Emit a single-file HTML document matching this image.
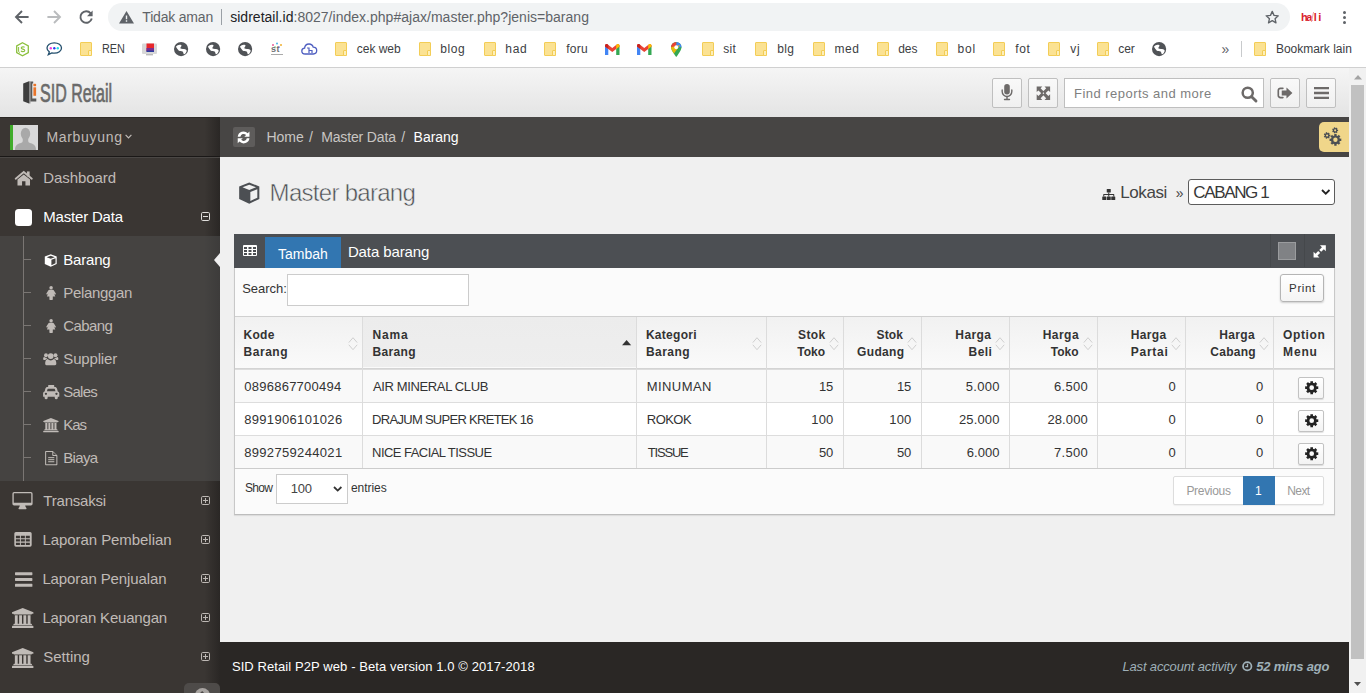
<!DOCTYPE html>
<html lang="id">
<head>
<meta charset="utf-8">
<title>SID Retail</title>
<style>
*{box-sizing:border-box;margin:0;padding:0}
html,body{width:1366px;height:693px;overflow:hidden;background:#fff}
body{font-family:"Liberation Sans",sans-serif;font-size:13px;color:#333;position:relative}
div,span.t{position:absolute}
span.t{white-space:pre}
svg{display:block;position:absolute;overflow:visible}
#chrome{left:0;top:0;width:1366px;height:68px;background:#fff;border-bottom:1px solid #d0d0d0}
#pill{left:108px;top:3px;width:1182px;height:28px;border-radius:14px;background:#f1f3f4}
.fold{width:12px;height:14px;top:42px;background:#fbe293;border:1px solid #f3cd56;border-radius:1px}
.fold i{position:absolute;right:-1px;bottom:-1px;width:4px;height:6px;background:#fdefb9;border:1px solid #f3cd56;border-radius:1px}
#header{left:0;top:68px;width:1349px;height:49px;background:linear-gradient(#f5f5f5,#e4e4e4)}
.hbtn{top:78px;width:30px;height:30px;border:1px solid #bfbfbf;border-radius:2px;background:linear-gradient(#f9f9f9,#f0f0f0)}
#side{left:0;top:117px;width:220px;height:576px;background:linear-gradient(to right,#3a3633 93%,#2a2725 100%)}
#ribbon{left:220px;top:117px;width:1129px;height:40px;background:#474544}
#main{left:220px;top:157px;width:1129px;height:485px;background:#f0f0f0}
#footer{left:220px;top:642px;width:1129px;height:51px;background:#2a2725}
#scroll{left:1349px;top:68px;width:17px;height:625px;background:#f1f1f1}
</style>
</head>
<body>
<section aria-label="Browser toolbar">
<div id="chrome"><div id="pill"></div></div>
<svg style="left:15px;top:10px" width="14" height="14" viewBox="0 0 14 14" ><path d="M13.600 7 H1.800 M7 1 L1 7 L7 13" fill="none" stroke="#5f6368" stroke-width="1.900"/></svg>
<svg style="left:47px;top:10px" width="14" height="14" viewBox="0 0 14 14" ><path d="M.4 7 H12.200 M7 1 L13 7 L7 13" fill="none" stroke="#babcbe" stroke-width="1.900"/></svg>
<svg style="left:79px;top:10px" width="14" height="14" viewBox="0 0 14 14" ><path d="M11.700 3.300 A5.800 5.800 0 1 0 12.800 8.600" fill="none" stroke="#5f6368" stroke-width="1.900"/><path d="M13.600 .6 V6.200 H8 Z" fill="#5f6368"/></svg>
<svg style="left:118.5px;top:11px" width="15" height="12.5" viewBox="0 0 15 12.500" ><path fill-rule="evenodd" d="M7.500 0 L15 12.500 H0 Z M6.800 4.600 V8.200 H8.200 V4.600 Z M6.800 9.300 V10.700 H8.200 V9.300 Z" fill="#5f6368"/></svg>
<span class="t" style="left:142.3px;top:8.1px;font-size:14px;line-height:18px;color:#5f6368;letter-spacing:-0.19px;">Tidak aman</span>
<div style="left:221px;top:9px;width:1px;height:16px;background:#9aa0a6"></div>
<span class="t" style="left:230.2px;top:8.1px;font-size:14px;line-height:18px;color:#5f6368;letter-spacing:0.02px;"><span style="color:#202124">sidretail.id</span>:8027/index.php#ajax/master.php?jenis=barang</span>
<svg style="left:1264.5px;top:10px" width="14.5" height="14" viewBox="0 0 24 23" ><path d="M12 2.200 L14.900 8.800 L22 9.500 L16.600 14.300 L18.200 21.300 L12 17.600 L5.800 21.300 L7.400 14.300 L2 9.500 L9.100 8.800 Z" fill="none" stroke="#5f6368" stroke-width="2.200" stroke-linejoin="round"/></svg>
<span class="t" style="left:1301.0px;top:10.2px;font-size:11px;line-height:14px;color:#d9232e;letter-spacing:-1.50px;font-weight:700;">ha</span>
<span class="t" style="left:1313.8px;top:10.2px;font-size:11px;line-height:14px;color:#d9232e;letter-spacing:1.50px;font-weight:700;">li</span>
<div style="left:1311.500px;top:12px;width:1px;height:10px;background:#f0a0a5;transform:skewX(-12deg)"></div>
<div style="left:1343px;top:11.1px;width:3px;height:3px;border-radius:50%;background:#5f6368"></div>
<div style="left:1343px;top:15.9px;width:3px;height:3px;border-radius:50%;background:#5f6368"></div>
<div style="left:1343px;top:20.8px;width:3px;height:3px;border-radius:50%;background:#5f6368"></div>
<svg style="left:15.5px;top:41.5px" width="13" height="14.5" viewBox="0 0 13 14.500" ><path d="M6.500 .7 L12.300 4 V10.500 L6.500 13.800 L.7 10.500 V4 Z" fill="none" stroke="#8cc03e" stroke-width="1.300"/><path d="M8.600 5.400 C8.300 4.700 5.200 4.500 5.200 6 C5.200 7.400 8.800 6.800 8.800 8.500 C8.800 10 5.400 9.900 5 8.800" fill="none" stroke="#8cc03e" stroke-width="1.100"/><path d="M2.600 5 V9.200 C2.600 10.300 3.600 10.600 4 10.200" fill="none" stroke="#8cc03e" stroke-width="1"/></svg>
<svg style="left:45.5px;top:42px" width="16.5" height="13.5" viewBox="0 0 16.500 13.500" ><path d="M8.300 .8 C4.300 .8 1 3 1 6 C1 7.600 1.900 9 3.300 9.900 L2.300 12.700 L5.800 10.900 C6.600 11.100 7.400 11.200 8.300 11.200 C12.300 11.200 15.500 9 15.500 6 C15.500 3 12.300 .8 8.300 .8 Z" fill="#fff" stroke="#24506e" stroke-width="1.300"/><circle cx="4.800" cy="6.200" r="1.200" fill="#f540d8"/><circle cx="8.300" cy="6.200" r="1.200" fill="#2a3cf0"/><circle cx="11.800" cy="6.200" r="1.200" fill="#21e0e6"/></svg>
<div class="fold" style="left:80px"><i></i></div>
<span class="t" style="left:102.1px;top:40.6px;font-size:12px;line-height:16px;color:#3c4043;letter-spacing:0.00px;transform-origin:0 50%;transform:scaleX(0.906);">REN</span>
<svg style="left:142px;top:42px" width="15" height="14" viewBox="0 0 15 14" ><rect x="0" y="1.500" width="15" height="10.500" rx="1" fill="#d8d8d8"/><rect x="4.500" y="1.500" width="7.500" height="7.500" fill="#e8262a"/><rect x="4.500" y="6" width="7.500" height="3.500" fill="#7a2f8f"/><rect x="4.500" y="8.500" width="7.500" height="1.500" fill="#2a3f9f"/><rect x="4" y="12" width="7" height="1.400" fill="#bbb"/></svg>
<svg style="left:174px;top:42px" width="14.2" height="14.2" viewBox="0 0 24 24" ><circle cx="12" cy="12" r="12" fill="#505357"/><path d="M3.200 8.200 C5.500 5 9.500 3.800 12 5.200 C14 6.400 11.500 8.200 10.800 9.800 C10.200 11.400 12.800 11.600 14.800 11.800 C17.500 12 20.500 12.200 21.600 14.600 C20.800 18 18.800 20.200 16.800 20.800 C15.200 19.600 16.200 17.400 14.600 16.200 C12.800 14.800 9.800 15.800 7.800 14.200 C6 12.800 5 10.200 3.200 8.200 Z" fill="#fff"/></svg>
<svg style="left:206px;top:42px" width="14.2" height="14.2" viewBox="0 0 24 24" ><circle cx="12" cy="12" r="12" fill="#505357"/><path d="M3.200 8.200 C5.500 5 9.500 3.800 12 5.200 C14 6.400 11.500 8.200 10.800 9.800 C10.200 11.400 12.800 11.600 14.800 11.800 C17.500 12 20.500 12.200 21.600 14.600 C20.800 18 18.800 20.200 16.800 20.800 C15.200 19.600 16.200 17.400 14.600 16.200 C12.800 14.800 9.800 15.800 7.800 14.200 C6 12.800 5 10.200 3.200 8.200 Z" fill="#fff"/></svg>
<svg style="left:238px;top:42px" width="14.2" height="14.2" viewBox="0 0 24 24" ><circle cx="12" cy="12" r="12" fill="#505357"/><path d="M3.200 8.200 C5.500 5 9.500 3.800 12 5.200 C14 6.400 11.500 8.200 10.800 9.800 C10.200 11.400 12.800 11.600 14.800 11.800 C17.500 12 20.500 12.200 21.600 14.600 C20.800 18 18.800 20.200 16.800 20.800 C15.200 19.600 16.200 17.400 14.600 16.200 C12.800 14.800 9.800 15.800 7.800 14.200 C6 12.800 5 10.200 3.200 8.200 Z" fill="#fff"/></svg>
<svg style="left:1152px;top:42px" width="14.2" height="14.2" viewBox="0 0 24 24" ><circle cx="12" cy="12" r="12" fill="#505357"/><path d="M3.200 8.200 C5.500 5 9.500 3.800 12 5.200 C14 6.400 11.500 8.200 10.800 9.800 C10.200 11.400 12.800 11.600 14.800 11.800 C17.500 12 20.500 12.200 21.600 14.600 C20.800 18 18.800 20.200 16.800 20.800 C15.200 19.600 16.200 17.400 14.600 16.200 C12.800 14.800 9.800 15.800 7.800 14.200 C6 12.800 5 10.200 3.200 8.200 Z" fill="#fff"/></svg>
<svg style="left:270px;top:42px" width="14" height="14" viewBox="0 0 14 14" ><circle cx="3" cy="3" r="1" fill="#e85d9a"/><circle cx="7" cy="1.500" r="1" fill="#4ab4e6"/><circle cx="11" cy="3" r="1" fill="#f0b030"/><circle cx="5" cy="5" r=".8" fill="#67c26a"/><circle cx="9" cy="5" r=".8" fill="#9a6ad0"/><rect x="1" y="12" width="12" height="1" fill="#aaa"/></svg><span class="t" style="left:271.0px;top:42.9px;font-size:9px;line-height:12px;color:#6b6f73;letter-spacing:0.56px;font-weight:700;">st</span>
<svg style="left:301px;top:43px" width="16.5" height="12" viewBox="0 0 16.500 12" ><path d="M4.200 11 C2 11 .8 9.600 .8 8 C.8 6.400 2 5.200 3.600 5.100 C3.800 2.700 5.700 1 8 1 C10 1 11.700 2.300 12.200 4.200 C14.200 4.300 15.700 5.700 15.700 7.600 C15.700 9.500 14.200 11 12.300 11 Z" fill="none" stroke="#4e5ec0" stroke-width="1.300"/><path d="M6 5 H8 V10 M8 7.500 H11 V10" fill="none" stroke="#4e5ec0" stroke-width="1.200"/></svg>
<div class="fold" style="left:335px"><i></i></div>
<span class="t" style="left:356.8px;top:40.6px;font-size:12px;line-height:16px;color:#3c4043;letter-spacing:-0.02px;">cek web</span>
<div class="fold" style="left:419px"><i></i></div>
<span class="t" style="left:440.3px;top:40.6px;font-size:12px;line-height:16px;color:#3c4043;letter-spacing:0.60px;">blog</span>
<div class="fold" style="left:484px"><i></i></div>
<span class="t" style="left:505.3px;top:40.6px;font-size:12px;line-height:16px;color:#3c4043;letter-spacing:0.70px;">had</span>
<div class="fold" style="left:544px"><i></i></div>
<span class="t" style="left:566.2px;top:40.6px;font-size:12px;line-height:16px;color:#3c4043;letter-spacing:0.30px;">foru</span>
<div class="fold" style="left:702px"><i></i></div>
<span class="t" style="left:723.3px;top:40.6px;font-size:12px;line-height:16px;color:#3c4043;letter-spacing:0.27px;">sit</span>
<div class="fold" style="left:755px"><i></i></div>
<span class="t" style="left:777.2px;top:40.6px;font-size:12px;line-height:16px;color:#3c4043;letter-spacing:0.37px;">blg</span>
<div class="fold" style="left:813px"><i></i></div>
<span class="t" style="left:834.5px;top:40.6px;font-size:12px;line-height:16px;color:#3c4043;letter-spacing:0.55px;">med</span>
<div class="fold" style="left:877px"><i></i></div>
<span class="t" style="left:898.3px;top:40.6px;font-size:12px;line-height:16px;color:#3c4043;letter-spacing:-0.12px;">des</span>
<div class="fold" style="left:936px"><i></i></div>
<span class="t" style="left:957.5px;top:40.6px;font-size:12px;line-height:16px;color:#3c4043;letter-spacing:0.82px;">bol</span>
<div class="fold" style="left:993px"><i></i></div>
<span class="t" style="left:1015.2px;top:40.6px;font-size:12px;line-height:16px;color:#3c4043;letter-spacing:0.65px;">fot</span>
<div class="fold" style="left:1048px"><i></i></div>
<span class="t" style="left:1070.2px;top:40.6px;font-size:12px;line-height:16px;color:#3c4043;letter-spacing:0.87px;">vj</span>
<div class="fold" style="left:1097px"><i></i></div>
<span class="t" style="left:1118.3px;top:40.6px;font-size:12px;line-height:16px;color:#3c4043;letter-spacing:-0.17px;">cer</span>
<div class="fold" style="left:1254px"><i></i></div>
<span class="t" style="left:1275.9px;top:40.6px;font-size:12px;line-height:16px;color:#3c4043;letter-spacing:-0.01px;">Bookmark lain</span>
<svg style="left:605px;top:44px" width="14.5" height="11" viewBox="0 0 14.500 11" ><path d="M0 1.500 V11 H3.300 V5 Z" fill="#4285f4"/><path d="M14.500 1.500 V11 H11.200 V5 Z" fill="#34a853"/><path d="M0 1.600 C0 .2 1.600 -.5 2.700 .4 L7.250 3.900 L11.800 .4 C12.900 -.5 14.500 .2 14.500 1.600 V2.500 L7.250 8 L0 2.500 Z" fill="#ea4335"/><path d="M11.200 .9 L11.800 .4 C12.900 -.5 14.500 .2 14.500 1.600 V2.500 L11.200 5 Z" fill="#fbbc04"/><path d="M3.300 .9 L2.700 .4 C1.600 -.5 0 .2 0 1.600 V2.500 L3.300 5 Z" fill="#c5221f"/></svg>
<svg style="left:636.5px;top:44px" width="14.5" height="11" viewBox="0 0 14.500 11" ><path d="M0 1.500 V11 H3.300 V5 Z" fill="#4285f4"/><path d="M14.500 1.500 V11 H11.200 V5 Z" fill="#34a853"/><path d="M0 1.600 C0 .2 1.600 -.5 2.700 .4 L7.250 3.900 L11.800 .4 C12.900 -.5 14.500 .2 14.500 1.600 V2.500 L7.250 8 L0 2.500 Z" fill="#ea4335"/><path d="M11.200 .9 L11.800 .4 C12.900 -.5 14.500 .2 14.500 1.600 V2.500 L11.200 5 Z" fill="#fbbc04"/><path d="M3.300 .9 L2.700 .4 C1.600 -.5 0 .2 0 1.600 V2.500 L3.300 5 Z" fill="#c5221f"/></svg>
<svg style="left:670.5px;top:41.5px" width="10.5" height="15" viewBox="0 0 10.500 15" ><path d="M5.250 15 C5.250 15 0 8.500 0 5.250 A5.250 5.250 0 0 1 10.500 5.250 C10.500 8.500 5.250 15 5.250 15 Z" fill="#34a853"/><path d="M5.250 0 A5.250 5.250 0 0 1 10.500 5.250 L5.250 5.250 Z" fill="#4285f4"/><path d="M5.250 0 A5.250 5.250 0 0 0 0 5.250 L5.250 5.250 Z" fill="#ea4335"/><path d="M0 5.250 C0 7 1.500 9.500 3 11.500 L9 3 Z" fill="#fbbc04" opacity=".9"/><circle cx="5.250" cy="5.250" r="1.900" fill="#fff"/></svg>
<span class="t" style="left:1221.6px;top:40.1px;font-size:14px;line-height:18px;color:#5f6368;letter-spacing:1.50px;">»</span>
<div style="left:1241px;top:41px;width:1px;height:16px;background:#c8cacc"></div>
</section><header>
<div id="header"></div>
<svg style="left:23px;top:81px" width="14" height="23" viewBox="0 0 14 23" ><path d="M.2 2.400 L6 .3 V22.500 L.2 20.300 Z" fill="#3e3e3e"/><path d="M6 .3 H7.400 V22.500 H6 Z" fill="#8a8a8a"/><path d="M7.400 .5 H10.200 V2.600 H9.300 V17.600 H13.300 V20.400 H7.400 Z" fill="#595959"/><rect x="10.400" y="6.300" width="2.700" height="8.500" fill="#e9742a"/><rect x="10.400" y="2.800" width="2.700" height="2.500" rx=".6" fill="#e9742a"/></svg>
<span class="t" style="left:39.900px;top:76.200px;font-size:26px;line-height:34px;color:#6a6a6a;-webkit-text-stroke:.7px #6a6a6a;transform-origin:0 0;transform:scaleX(0.616)">SID Retail</span>
<div class="hbtn" style="left:992px"></div>
<div class="hbtn" style="left:1028px"></div>
<div class="hbtn" style="left:1270px"></div>
<div class="hbtn" style="left:1306px"></div>
<div style="left:1064px;top:78px;width:200px;height:30px;border:1px solid #bfbfbf;background:#fff"></div>
<svg style="left:1001px;top:84px" width="12" height="16.5" viewBox="0 0 18 26" ><rect x="4.600" y="0" width="8.800" height="16.500" rx="4.400" fill="#6d6a69"/><path d="M1.400 9.500 V12 a7.600 7.600 0 0 0 15.200 0 V9.500" fill="none" stroke="#6d6a69" stroke-width="2.200" stroke-linecap="round"/><rect x="7.900" y="19" width="2.200" height="5" fill="#6d6a69"/><rect x="4" y="23.400" width="10" height="2.200" rx="1" fill="#6d6a69"/></svg>
<svg style="left:1035.7px;top:85.7px" width="14.8" height="14.4" viewBox="0 0 24 24" fill="#6d6a69"><path transform="rotate(0 12 12)" d="M.8 .8 H10.200 L7.300 3.700 L13 9.400 L9.400 13 L3.700 7.300 L.8 10.200 Z"/><path transform="rotate(90 12 12)" d="M.8 .8 H10.200 L7.300 3.700 L13 9.400 L9.400 13 L3.700 7.300 L.8 10.200 Z"/><path transform="rotate(180 12 12)" d="M.8 .8 H10.200 L7.300 3.700 L13 9.400 L9.400 13 L3.700 7.300 L.8 10.200 Z"/><path transform="rotate(270 12 12)" d="M.8 .8 H10.200 L7.300 3.700 L13 9.400 L9.400 13 L3.700 7.300 L.8 10.200 Z"/></svg>
<span class="t" style="left:1074.1px;top:85.1px;font-size:13px;line-height:17px;color:#808080;letter-spacing:0.46px;">Find reports and more</span>
<svg style="left:1240.5px;top:85.5px" width="16.5" height="16.5" viewBox="0 0 24 24" ><circle cx="9.800" cy="9.800" r="7.400" fill="none" stroke="#6d6a69" stroke-width="3.600"/><path d="M15.500 15.500 L21.800 21.800" stroke="#6d6a69" stroke-width="4.200" stroke-linecap="round"/></svg>
<svg style="left:1276.6px;top:86.9px" width="15.4" height="11.9" viewBox="0 0 26 20" ><path d="M10 2.200 H5.800 A3.600 3.600 0 0 0 2.200 5.800 V14.200 A3.600 3.600 0 0 0 5.800 17.800 H10" fill="none" stroke="#6d6a69" stroke-width="2.800" stroke-linecap="round"/><path d="M8 5.800 H16 V.8 L26 10 L16 19.200 V14.200 H8 Z" fill="#6d6a69"/></svg>
<svg style="left:1313.7px;top:86.9px" width="15" height="12" viewBox="0 0 15 12" ><path d="M0 0 h15 v2.300 h-15 Z M0 4.850 h15 v2.300 h-15 Z M0 9.700 h15 v2.300 h-15 Z" fill="#6d6a69"/></svg>
</header>
<aside><nav aria-label="Main menu">
<div id="side"></div>
<div style="left:0;top:117px;width:220px;height:40px;border-top:1px solid #2b2826;border-bottom:1px solid #1a1817;box-shadow:0 1px 0 #4a4745"></div>
<div style="left:10px;top:125px;width:28px;height:25px;background:#d9d9d9;border-left:3px solid #40ac2b;overflow:hidden"><svg style="left:3px;top:2px" width="19" height="23" viewBox="0 0 19 23" ><ellipse cx="9.500" cy="6.800" rx="4.700" ry="6" fill="#a9a9a9"/><path d="M-1 23 C-1 18 2 16.800 5.500 15.800 C7 15.200 7 13.500 6.600 11 H12.400 C12 13.500 12 15.200 13.500 15.800 C17 16.800 20 18 20 23 Z" fill="#a9a9a9"/></svg></div>
<span class="t" style="left:46.4px;top:128.3px;font-size:14px;line-height:18px;color:#c0bbb7;letter-spacing:0.70px;">Marbuyung</span>
<svg style="left:125px;top:134.2px" width="7" height="5" viewBox="0 0 7 5" ><path d="M.6 .8 L3.500 3.800 L6.400 .8" fill="none" stroke="#c0bbb7" stroke-width="1.200"/></svg>
<div style="left:0;top:236px;width:220px;height:245px;background:rgba(80,80,80,.5)"></div>
<svg style="left:14.5px;top:170.5px" width="17.5" height="14.5" viewBox="0 0 17.600 14.500" ><path d="M.7 7.700 L8.800 1 L16.900 7.700" fill="none" stroke="#c0bbb7" stroke-width="1.900" stroke-linecap="round"/><rect x="12" y=".4" width="2.700" height="5" fill="#c0bbb7"/><path d="M2.500 8.600 L8.800 3.400 L15.100 8.600 V14.500 H10.500 V10.300 H7.100 V14.500 H2.500 Z" fill="#c0bbb7"/></svg>
<span class="t" style="left:43.3px;top:167.6px;font-size:15px;line-height:20px;color:#c0bbb7;letter-spacing:-0.07px;">Dashboard</span>
<div style="left:14.500px;top:209px;width:17.500px;height:17px;border-radius:3.500px;background:#fff"></div>
<span class="t" style="left:43.3px;top:206.9px;font-size:15px;line-height:20px;color:#fff;letter-spacing:-0.20px;">Master Data</span>
<svg style="left:201px;top:212px" width="9" height="9" viewBox="0 0 9 9" ><rect x=".5" y=".5" width="8" height="8" rx="1.200" fill="none" stroke="#e0dedc" stroke-width="1"/><rect x="2" y="4" width="5" height="1" fill="#e0dedc"/></svg>
<div style="left:23px;top:236px;width:1px;height:245px;background:#7a7673"></div>
<div style="left:24px;top:259.0px;width:7px;height:1px;background:#7a7673"></div>
<svg style="left:43.6px;top:254px" width="13.5" height="13" viewBox="0 0 24 24" fill="#fff"><path fill-rule="evenodd" d="M12 .6 L23 4.8 V18.6 L12 23.6 L1 18.6 V4.8 Z M12 3 L4.6 5.8 L12 8.7 L19.4 5.8 Z M13.2 10.8 V20.6 L20.8 17.2 V7.8 Z"/></svg>
<span class="t" style="left:63.3px;top:249.6px;font-size:15px;line-height:20px;color:#fff;letter-spacing:-0.19px;">Barang</span>
<div style="left:24px;top:292.0px;width:7px;height:1px;background:#7a7673"></div>
<svg style="left:45.8px;top:286px" width="10.2" height="14" viewBox="0 0 20 28" fill="#c0bbb7"><circle cx="10" cy="3.600" r="3.500"/><path d="M6.800 7.600 H13.200 a3 3 0 0 1 2.700 1.700 L19.400 15 a1.400 1.400 0 0 1 -2.500 1.300 L15.200 13.400 L18.400 21 H13.400 V26.600 a1.200 1.200 0 0 1 -1.200 1.200 H7.800 a1.200 1.200 0 0 1 -1.200 -1.200 V21 H1.600 L4.800 13.400 L3.100 16.300 A1.400 1.400 0 0 1 .6 15 L4.100 9.300 A3 3 0 0 1 6.800 7.600 Z"/></svg>
<span class="t" style="left:63.3px;top:282.6px;font-size:15px;line-height:20px;color:#c0bbb7;letter-spacing:-0.35px;">Pelanggan</span>
<div style="left:24px;top:325.0px;width:7px;height:1px;background:#7a7673"></div>
<svg style="left:45.8px;top:319px" width="10.2" height="14" viewBox="0 0 20 28" fill="#c0bbb7"><circle cx="10" cy="3.600" r="3.500"/><path d="M6.800 7.600 H13.200 a3 3 0 0 1 2.700 1.700 L19.400 15 a1.400 1.400 0 0 1 -2.500 1.300 L15.200 13.400 L18.400 21 H13.400 V26.600 a1.200 1.200 0 0 1 -1.200 1.200 H7.800 a1.200 1.200 0 0 1 -1.200 -1.200 V21 H1.600 L4.800 13.400 L3.100 16.300 A1.400 1.400 0 0 1 .6 15 L4.100 9.300 A3 3 0 0 1 6.800 7.600 Z"/></svg>
<span class="t" style="left:63.3px;top:315.6px;font-size:15px;line-height:20px;color:#c0bbb7;letter-spacing:-0.62px;">Cabang</span>
<div style="left:24px;top:358.0px;width:7px;height:1px;background:#7a7673"></div>
<svg style="left:43px;top:351.7px" width="15.5" height="14.2" viewBox="0 0 30 28" fill="#c0bbb7"><circle cx="15" cy="8" r="5.6"/><circle cx="5.6" cy="6.4" r="3.8"/><circle cx="24.4" cy="6.4" r="3.8"/><path d="M6.6 26 C5 26 4 24.8 4 23.4 C4 18.4 5.4 14 9 14 C10.6 15.6 12.6 16.6 15 16.6 S19.4 15.6 21 14 C24.6 14 26 18.4 26 23.4 C26 24.8 25 26 23.4 26 Z"/><path d="M8 12.6 C6.2 13 5 14.4 4.2 16 H2.6 C1 16 0 15.2 0 13.8 C0 11.6 .4 10 2.2 10 C3.2 11 4.4 11.6 5.6 11.6 C6.4 11.6 7 11.4 7.6 11.2 C7.6 11.7 7.8 12.2 8 12.6 Z"/><path d="M22 12.6 C23.8 13 25 14.4 25.8 16 H27.4 C29 16 30 15.2 30 13.8 C30 11.6 29.6 10 27.8 10 C26.8 11 25.6 11.6 24.4 11.6 C23.6 11.6 23 11.4 22.4 11.2 C22.4 11.7 22.2 12.2 22 12.6 Z"/></svg>
<span class="t" style="left:63.3px;top:348.6px;font-size:15px;line-height:20px;color:#c0bbb7;letter-spacing:-0.16px;">Supplier</span>
<div style="left:24px;top:391.0px;width:7px;height:1px;background:#7a7673"></div>
<svg style="left:42.7px;top:384.8px" width="16.4" height="14.2" viewBox="0 0 32 28" fill="#c0bbb7"><path fill-rule="evenodd" d="M11 0 H21 a1 1 0 0 1 1 1 V4 H23.4 C25.4 4 26.8 5.2 27.4 7 L29 12.6 C30.8 13 32 14.4 32 16.4 V22 a1 1 0 0 1 -1 1 H29 V25 a3 3 0 0 1 -6 0 V23 H9 V25 a3 3 0 0 1 -6 0 V23 H1 a1 1 0 0 1 -1 -1 V16.4 C0 14.400 1.200 13 3 12.6 L4.6 7 C5.200 5.200 6.6 4 8.600 4 H10 V1 a1 1 0 0 1 1 -1 Z M8.800 8 L7.600 12.400 H24.400 L23.200 8 a.8 .8 0 0 0 -.8 -.6 H9.600 a.8 .8 0 0 0 -.8 .6 Z M5.600 15.200 a2.300 2.300 0 1 0 0 4.600 a2.300 2.300 0 0 0 0 -4.600 Z M26.400 15.200 a2.300 2.300 0 1 0 0 4.600 a2.300 2.300 0 0 0 0 -4.600 Z"/></svg>
<span class="t" style="left:63.3px;top:381.6px;font-size:15px;line-height:20px;color:#c0bbb7;letter-spacing:-0.78px;">Sales</span>
<div style="left:24px;top:424.0px;width:7px;height:1px;background:#7a7673"></div>
<svg style="left:42.7px;top:417.8px" width="15.8" height="14.2" viewBox="0 0 30 28" fill="#c0bbb7"><path d="M15 0 L30 6 V8 H28 a1 1 0 0 1 -1 1 H3 a1 1 0 0 1 -1 -1 H0 V6 Z"/><path d="M4 10 H8 V22 H10 V10 H14 V22 H16 V10 H20 V22 H22 V10 H26 V22 H27 a1 1 0 0 1 1 1 V24 H2 V23 a1 1 0 0 1 1 -1 H4 Z"/><path d="M1 25 H29 a1 1 0 0 1 1 1 V28 H0 V26 a1 1 0 0 1 1 -1 Z"/></svg>
<span class="t" style="left:63.3px;top:414.6px;font-size:15px;line-height:20px;color:#c0bbb7;letter-spacing:-1.03px;">Kas</span>
<div style="left:24px;top:457.0px;width:7px;height:1px;background:#7a7673"></div>
<svg style="left:44.8px;top:451px" width="12.5" height="14.3" viewBox="0 0 24 28" fill="#c0bbb7"><path fill-rule="evenodd" d="M1.500 0 H15 L24 9 V26.500 a1.500 1.500 0 0 1 -1.500 1.500 H1.500 a1.500 1.500 0 0 1 -1.500 -1.500 V1.500 a1.500 1.500 0 0 1 1.500 -1.500 Z M2 2 V26 H22 V10 H15.500 a1.500 1.500 0 0 1 -1.500 -1.500 V2 Z M16 2.600 V8 H21.400 Z"/><rect x="6" y="12" width="12" height="2"/><rect x="6" y="16" width="12" height="2"/><rect x="6" y="20" width="12" height="2"/></svg>
<span class="t" style="left:63.3px;top:447.6px;font-size:15px;line-height:20px;color:#c0bbb7;letter-spacing:-0.70px;">Biaya</span>
<div style="left:214px;top:253px;width:0;height:0;border-top:7px solid transparent;border-bottom:7px solid transparent;border-right:6px solid #f0f0f0"></div>
<svg style="left:12.4px;top:492px" width="21" height="17.5" viewBox="0 0 30 26" fill="#c0bbb7"><path fill-rule="evenodd" d="M2.500 0 H27.500 a2.500 2.500 0 0 1 2.500 2.500 V17.500 a2.500 2.500 0 0 1 -2.500 2.500 H19 c0 1 .6 2.300 1.200 3.200 c.4 .5 .8 1 .8 1.300 c0 .6 -.4 1 -1 1 H10 c-.6 0 -1 -.4 -1 -1 c0 -.3 .4 -.8 .8 -1.300 c.6 -.9 1.200 -2.200 1.200 -3.200 H2.500 a2.500 2.500 0 0 1 -2.500 -2.500 V2.500 a2.500 2.500 0 0 1 2.500 -2.500 Z M2.500 2 a.5 .5 0 0 0 -.5 .5 V15.500 a.5 .5 0 0 0 .5 .5 H27.500 a.5 .5 0 0 0 .5 -.5 V2.500 a.5 .5 0 0 0 -.5 -.5 Z"/></svg>
<span class="t" style="left:43.3px;top:490.7px;font-size:15px;line-height:20px;color:#c0bbb7;letter-spacing:-0.20px;">Transaksi</span>
<svg style="left:201px;top:496px" width="9" height="9" viewBox="0 0 9 9" ><rect x=".5" y=".5" width="8" height="8" rx="1.200" fill="none" stroke="#bdb8b4" stroke-width="1"/><rect x="2" y="4" width="5" height="1" fill="#bdb8b4"/><rect x="4" y="2" width="1" height="5" fill="#bdb8b4"/></svg>
<svg style="left:14px;top:532.3px" width="18" height="14.7" viewBox="0 0 26 22" fill="#c0bbb7"><path fill-rule="evenodd" d="M2.400 0 H23.600 a2.400 2.400 0 0 1 2.400 2.400 V19.600 a2.400 2.400 0 0 1 -2.400 2.400 H2.400 a2.400 2.400 0 0 1 -2.400 -2.400 V2.400 a2.400 2.400 0 0 1 2.400 -2.400 Z M2.4 5.6 h6 v3.600 h-6 Z M9.8 5.6 h6 v3.600 h-6 Z M17.2 5.6 h6 v3.600 h-6 Z M2.4 10.8 h6 v3.600 h-6 Z M9.8 10.8 h6 v3.600 h-6 Z M17.2 10.8 h6 v3.600 h-6 Z M2.4 16.0 h6 v3.600 h-6 Z M9.8 16.0 h6 v3.600 h-6 Z M17.2 16.0 h6 v3.600 h-6 Z "/></svg>
<span class="t" style="left:42.4px;top:529.8px;font-size:15px;line-height:20px;color:#c0bbb7;letter-spacing:-0.06px;">Laporan Pembelian</span>
<svg style="left:201px;top:535px" width="9" height="9" viewBox="0 0 9 9" ><rect x=".5" y=".5" width="8" height="8" rx="1.200" fill="none" stroke="#bdb8b4" stroke-width="1"/><rect x="2" y="4" width="5" height="1" fill="#bdb8b4"/><rect x="4" y="2" width="1" height="5" fill="#bdb8b4"/></svg>
<svg style="left:14.6px;top:571.7px" width="17.4" height="15" viewBox="0 0 24 20" fill="#c0bbb7"><rect x="0" y="0" width="24" height="4" rx=".8"/><rect x="0" y="8" width="24" height="4" rx=".8"/><rect x="0" y="16" width="24" height="4" rx=".8"/></svg>
<span class="t" style="left:42.4px;top:568.9px;font-size:15px;line-height:20px;color:#c0bbb7;letter-spacing:-0.11px;">Laporan Penjualan</span>
<svg style="left:201px;top:574px" width="9" height="9" viewBox="0 0 9 9" ><rect x=".5" y=".5" width="8" height="8" rx="1.200" fill="none" stroke="#bdb8b4" stroke-width="1"/><rect x="2" y="4" width="5" height="1" fill="#bdb8b4"/><rect x="4" y="2" width="1" height="5" fill="#bdb8b4"/></svg>
<svg style="left:11.8px;top:608.4px" width="21.4" height="20" viewBox="0 0 30 28" fill="#c0bbb7"><path d="M15 0 L30 6 V8 H28 a1 1 0 0 1 -1 1 H3 a1 1 0 0 1 -1 -1 H0 V6 Z"/><path d="M4 10 H8 V22 H10 V10 H14 V22 H16 V10 H20 V22 H22 V10 H26 V22 H27 a1 1 0 0 1 1 1 V24 H2 V23 a1 1 0 0 1 1 -1 H4 Z"/><path d="M1 25 H29 a1 1 0 0 1 1 1 V28 H0 V26 a1 1 0 0 1 1 -1 Z"/></svg>
<span class="t" style="left:42.4px;top:608.0px;font-size:15px;line-height:20px;color:#c0bbb7;letter-spacing:-0.19px;">Laporan Keuangan</span>
<svg style="left:201px;top:613px" width="9" height="9" viewBox="0 0 9 9" ><rect x=".5" y=".5" width="8" height="8" rx="1.200" fill="none" stroke="#bdb8b4" stroke-width="1"/><rect x="2" y="4" width="5" height="1" fill="#bdb8b4"/><rect x="4" y="2" width="1" height="5" fill="#bdb8b4"/></svg>
<svg style="left:11.8px;top:647.5px" width="21.4" height="20" viewBox="0 0 30 28" fill="#c0bbb7"><path d="M15 0 L30 6 V8 H28 a1 1 0 0 1 -1 1 H3 a1 1 0 0 1 -1 -1 H0 V6 Z"/><path d="M4 10 H8 V22 H10 V10 H14 V22 H16 V10 H20 V22 H22 V10 H26 V22 H27 a1 1 0 0 1 1 1 V24 H2 V23 a1 1 0 0 1 1 -1 H4 Z"/><path d="M1 25 H29 a1 1 0 0 1 1 1 V28 H0 V26 a1 1 0 0 1 1 -1 Z"/></svg>
<span class="t" style="left:43.3px;top:647.1px;font-size:15px;line-height:20px;color:#c0bbb7;letter-spacing:-0.01px;">Setting</span>
<svg style="left:201px;top:652px" width="9" height="9" viewBox="0 0 9 9" ><rect x=".5" y=".5" width="8" height="8" rx="1.200" fill="none" stroke="#bdb8b4" stroke-width="1"/><rect x="2" y="4" width="5" height="1" fill="#bdb8b4"/><rect x="4" y="2" width="1" height="5" fill="#bdb8b4"/></svg>
<div style="left:184px;top:683px;width:36px;height:20px;border-radius:5px 5px 0 0;background:#4e4b49"></div>
<div style="left:194.500px;top:687.500px;width:15px;height:15px;border-radius:50%;background:#a8a4a1"></div>
<svg style="left:199px;top:690.5px" width="6" height="3" viewBox="0 0 6 3" ><path d="M3.200 0 L6 3 H0 Z" fill="#4e4b49"/></svg>
</nav></aside>
<nav aria-label="Breadcrumb">
<div id="ribbon"></div>
<div style="left:233px;top:127px;width:22px;height:20px;border-radius:2px;background:#5e5c5b"></div>
<svg style="left:237.3px;top:130.6px" width="13.2" height="12.8" viewBox="0 0 24 24" fill="#fff"><path d="M1 10.600 A11 11 0 0 1 19.800 4.200 L23 1 V10.600 H13.400 L16.600 7.400 A6.200 6.200 0 0 0 6 10.600 Z"/><path transform="rotate(180 12 12)" d="M1 10.600 A11 11 0 0 1 19.800 4.200 L23 1 V10.600 H13.400 L16.600 7.400 A6.200 6.200 0 0 0 6 10.600 Z"/></svg>
<span class="t" style="left:266.4px;top:128.0px;font-size:14px;line-height:18px;color:#c9c6c3;letter-spacing:0.04px;">Home</span>
<span class="t" style="left:309.0px;top:128.0px;font-size:14px;line-height:18px;color:#c9c6c3;letter-spacing:1.26px;">/</span>
<span class="t" style="left:321.2px;top:128.0px;font-size:14px;line-height:18px;color:#c9c6c3;letter-spacing:-0.15px;">Master Data</span>
<span class="t" style="left:401.3px;top:128.0px;font-size:14px;line-height:18px;color:#c9c6c3;letter-spacing:0.36px;">/</span>
<span class="t" style="left:413.6px;top:128.0px;font-size:14px;line-height:18px;color:#fff;letter-spacing:-0.02px;">Barang</span>
<div style="left:1319px;top:122px;width:30px;height:30px;border-radius:5px 0 0 5px;background:#f0d68a"></div>
<svg style="left:1322.5px;top:127px" width="19" height="19" viewBox="0 0 26 26" fill="#4c4f53"><path fill-rule="evenodd" d="M23.02 16.01 L25.03 15.84 L25.03 19.16 L23.02 18.99 L22.31 20.70 L23.85 22.00 L21.50 24.35 L20.20 22.81 L18.49 23.52 L18.66 25.53 L15.34 25.53 L15.51 23.52 L13.80 22.81 L12.50 24.35 L10.15 22.00 L11.69 20.70 L10.98 18.99 L8.97 19.16 L8.97 15.84 L10.98 16.01 L11.69 14.30 L10.15 13.00 L12.50 10.65 L13.80 12.19 L15.51 11.48 L15.34 9.47 L18.66 9.47 L18.49 11.48 L20.20 12.19 L21.50 10.65 L23.85 13.00 L22.31 14.30 Z M20.00 17.50 a3.0 3.0 0 1 0 -6.00 0 a3.0 3.0 0 1 0 6.00 0 Z M8.87 10.67 L10.08 10.54 L10.08 12.66 L8.87 12.53 L8.37 13.57 L9.22 14.44 L7.56 15.76 L6.91 14.74 L5.78 15.00 L5.64 16.20 L3.57 15.73 L3.96 14.58 L3.06 13.86 L2.03 14.50 L1.11 12.58 L2.25 12.18 L2.25 11.02 L1.11 10.62 L2.03 8.70 L3.06 9.34 L3.96 8.62 L3.57 7.47 L5.64 7.00 L5.78 8.20 L6.91 8.46 L7.56 7.44 L9.22 8.76 L8.37 9.63 Z M7.10 11.60 a1.5 1.5 0 1 0 -3.00 0 a1.5 1.5 0 1 0 3.00 0 Z M19.68 3.72 L20.69 3.63 L20.69 5.57 L19.68 5.48 L19.21 6.46 L19.91 7.19 L18.39 8.40 L17.83 7.55 L16.77 7.80 L16.64 8.80 L14.74 8.37 L15.06 7.40 L14.21 6.73 L13.34 7.25 L12.50 5.50 L13.45 5.14 L13.45 4.06 L12.50 3.70 L13.34 1.95 L14.21 2.47 L15.06 1.80 L14.74 0.83 L16.64 0.40 L16.77 1.40 L17.83 1.65 L18.39 0.80 L19.91 2.01 L19.21 2.74 Z M18.00 4.60 a1.4 1.4 0 1 0 -2.80 0 a1.4 1.4 0 1 0 2.80 0 Z"/></svg>
</nav><main>
<div id="main"></div>
<svg style="left:238px;top:182px" width="22.5" height="22" viewBox="0 0 24 24" fill="#4c4f53"><path fill-rule="evenodd" d="M12 .6 L23 4.8 V18.6 L12 23.6 L1 18.6 V4.8 Z M12 3 L4.6 5.8 L12 8.7 L19.4 5.8 Z M13.2 10.8 V20.6 L20.8 17.2 V7.8 Z"/></svg>
<span class="t" style="left:269.6px;top:177.4px;font-size:24px;line-height:31px;color:#4c4f53;letter-spacing:-0.71px;-webkit-text-stroke:.5px #f0f0f0;">Master barang</span>
<svg style="left:1102.3px;top:189px" width="13.5" height="11" viewBox="0 0 26 22" fill="#333"><rect x="9" y="0" width="8" height="7" rx="1"/><rect x="0" y="15" width="8" height="7" rx="1"/><rect x="9" y="15" width="8" height="7" rx="1"/><rect x="18" y="15" width="8" height="7" rx="1"/><path d="M12 7 h2 v3 h9 a1 1 0 0 1 1 1 v4 h-2 v-3 h-8 v3 h-2 v-3 h-8 v3 h-2 v-4 a1 1 0 0 1 1 -1 h9 Z"/></svg>
<span class="t" style="left:1120.3px;top:182.1px;font-size:17px;line-height:22px;color:#444;letter-spacing:-0.44px;">Lokasi</span>
<span class="t" style="left:1175.7px;top:183.6px;font-size:14px;line-height:18px;color:#444;letter-spacing:1.04px;">»</span>
<div style="left:1188px;top:179px;width:147px;height:26px;border:1px solid #5c5c5c;border-radius:3px;background:#fff"></div>
<span class="t" style="left:1193.3px;top:182.1px;font-size:17px;line-height:22px;color:#383838;letter-spacing:-1.35px;">CABANG 1</span>
<svg style="left:1320.5px;top:188.5px" width="9.5" height="6" viewBox="0 0 9.500 6" ><path d="M1 1 L4.750 4.700 L8.500 1" fill="none" stroke="#222" stroke-width="1.800"/></svg>
<div style="left:234px;top:234px;width:1101px;height:34px;background:#4c4f53"></div>
<div style="left:234px;top:268px;width:1101px;height:247px;background:#fbfbfb;border:1px solid #c8c8c8;border-top:0;border-bottom-color:#bdbdbd;box-shadow:0 1px 1px rgba(0,0,0,.08)"></div>
<svg style="left:243px;top:245px" width="14" height="11" viewBox="0 0 14 11" ><path fill-rule="evenodd" fill="#fff" d="M1 0 H13 a1 1 0 0 1 1 1 V10 a1 1 0 0 1 -1 1 H1 a1 1 0 0 1 -1 -1 V1 a1 1 0 0 1 1 -1 Z M1.0 2.0 h3 v2 h-3 Z M5.5 2.0 h3 v2 h-3 Z M10.0 2.0 h3 v2 h-3 Z M1.0 5.0 h3 v2 h-3 Z M5.5 5.0 h3 v2 h-3 Z M10.0 5.0 h3 v2 h-3 Z M1.0 8.0 h3 v2 h-3 Z M5.5 8.0 h3 v2 h-3 Z M10.0 8.0 h3 v2 h-3 Z"/></svg>
<div style="left:265px;top:237px;width:76px;height:31px;background:#3276b1"></div>
<span class="t" style="left:278.1px;top:244.7px;font-size:14px;line-height:18px;color:#fff;letter-spacing:-0.01px;">Tambah</span>
<span class="t" style="left:347.9px;top:242.1px;font-size:15px;line-height:20px;color:#fff;letter-spacing:-0.11px;">Data barang</span>
<div style="left:1270px;top:234px;width:1px;height:33px;background:#45484b"></div><div style="left:1304px;top:234px;width:1px;height:33px;background:#45484b"></div>
<div style="left:1278px;top:242px;width:18px;height:18px;background:#808285;border:1px solid #9a9c9e"></div>
<svg style="left:1312.8px;top:244.8px" width="13.4" height="12.8" viewBox="0 0 24 24" fill="#fff"><path transform="rotate(0 12 12)" d="M23.500 .5 V11.500 L19.800 7.800 L14.800 12.800 L11.200 9.200 L16.200 4.200 L12.500 .5 Z"/><path transform="rotate(180 12 12)" d="M23.500 .5 V11.500 L19.800 7.800 L14.800 12.800 L11.200 9.200 L16.200 4.200 L12.500 .5 Z"/></svg>
<span class="t" style="left:242.2px;top:280.1px;font-size:13px;line-height:17px;color:#333;letter-spacing:-0.03px;">Search:</span>
<div style="left:287px;top:274px;width:182px;height:32px;border:1px solid #ccc;background:#fff"></div>
<div style="left:1280px;top:274px;width:44px;height:27.500px;border:1px solid #b5b5b5;border-radius:3px;background:linear-gradient(#fff,#f4f4f4);box-shadow:0 1px 2px rgba(0,0,0,.18)"></div>
<span class="t" style="left:1289.1px;top:280.6px;font-size:11.5px;line-height:15px;color:#333;letter-spacing:0.64px;">Print</span>
<div style="left:235px;top:316px;width:1099px;height:53px;background:linear-gradient(#f1f1f1,#fafafa);border-top:1px solid #d0d0d0;border-bottom:1px solid #d4d4d4"></div>
<div style="left:362.4px;top:317px;width:274.0px;height:50px;background:linear-gradient(#ececec,#eeeeee)"></div>
<div style="left:235px;top:369px;width:1099px;height:33.39999999999998px;background:#f9f9f9;border-top:1px solid #ddd"></div>
<div style="left:235px;top:402.4px;width:1099px;height:33.0px;background:#fff;border-top:1px solid #ddd"></div>
<div style="left:235px;top:435.4px;width:1099px;height:33.0px;background:#f9f9f9;border-top:1px solid #ddd"></div>
<div style="left:235px;top:468.4px;width:1099px;height:1px;background:#ccc"></div>
<div style="left:361.9px;top:317px;width:1px;height:151.4px;background:#dcdcdc"></div>
<div style="left:635.9px;top:317px;width:1px;height:151.4px;background:#dcdcdc"></div>
<div style="left:765.9px;top:317px;width:1px;height:151.4px;background:#dcdcdc"></div>
<div style="left:842.8px;top:317px;width:1px;height:151.4px;background:#dcdcdc"></div>
<div style="left:920.9px;top:317px;width:1px;height:151.4px;background:#dcdcdc"></div>
<div style="left:1008.7px;top:317px;width:1px;height:151.4px;background:#dcdcdc"></div>
<div style="left:1096.8px;top:317px;width:1px;height:151.4px;background:#dcdcdc"></div>
<div style="left:1184.7px;top:317px;width:1px;height:151.4px;background:#dcdcdc"></div>
<div style="left:1272.9px;top:317px;width:1px;height:151.4px;background:#dcdcdc"></div>
<span class="t" style="left:243.5px;top:326.8px;font-size:12px;line-height:16px;color:#333;letter-spacing:0.29px;font-weight:700;">Kode</span>
<span class="t" style="left:243.5px;top:343.9px;font-size:12px;line-height:16px;color:#333;letter-spacing:0.54px;font-weight:700;">Barang</span>
<span class="t" style="left:372.4px;top:326.8px;font-size:12px;line-height:16px;color:#333;letter-spacing:0.88px;font-weight:700;">Nama</span>
<span class="t" style="left:372.4px;top:343.9px;font-size:12px;line-height:16px;color:#333;letter-spacing:0.36px;font-weight:700;">Barang</span>
<span class="t" style="left:645.9px;top:326.8px;font-size:12px;line-height:16px;color:#333;letter-spacing:0.29px;font-weight:700;">Kategori</span>
<span class="t" style="left:645.9px;top:343.9px;font-size:12px;line-height:16px;color:#333;letter-spacing:0.46px;font-weight:700;">Barang</span>
<span class="t" style="left:798.1px;top:326.8px;font-size:12px;line-height:16px;color:#333;letter-spacing:0.37px;font-weight:700;">Stok</span>
<span class="t" style="left:797.2px;top:343.9px;font-size:12px;line-height:16px;color:#333;letter-spacing:0.08px;font-weight:700;">Toko</span>
<span class="t" style="left:876.5px;top:326.8px;font-size:12px;line-height:16px;color:#333;letter-spacing:0.17px;font-weight:700;">Stok</span>
<span class="t" style="left:857.1px;top:343.9px;font-size:12px;line-height:16px;color:#333;letter-spacing:0.31px;font-weight:700;">Gudang</span>
<span class="t" style="left:955.3px;top:326.8px;font-size:12px;line-height:16px;color:#333;letter-spacing:0.42px;font-weight:700;">Harga</span>
<span class="t" style="left:968.5px;top:343.9px;font-size:12px;line-height:16px;color:#333;letter-spacing:0.46px;font-weight:700;">Beli</span>
<span class="t" style="left:1042.7px;top:326.8px;font-size:12px;line-height:16px;color:#333;letter-spacing:0.47px;font-weight:700;">Harga</span>
<span class="t" style="left:1050.8px;top:343.9px;font-size:12px;line-height:16px;color:#333;letter-spacing:0.01px;font-weight:700;">Toko</span>
<span class="t" style="left:1130.7px;top:326.8px;font-size:12px;line-height:16px;color:#333;letter-spacing:0.34px;font-weight:700;">Harga</span>
<span class="t" style="left:1130.7px;top:343.9px;font-size:12px;line-height:16px;color:#333;letter-spacing:0.76px;font-weight:700;">Partai</span>
<span class="t" style="left:1219.2px;top:326.8px;font-size:12px;line-height:16px;color:#333;letter-spacing:0.39px;font-weight:700;">Harga</span>
<span class="t" style="left:1210.3px;top:343.9px;font-size:12px;line-height:16px;color:#333;letter-spacing:0.28px;font-weight:700;">Cabang</span>
<span class="t" style="left:1283.1px;top:326.8px;font-size:12px;line-height:16px;color:#333;letter-spacing:0.60px;font-weight:700;">Option</span>
<span class="t" style="left:1283.1px;top:343.9px;font-size:12px;line-height:16px;color:#333;letter-spacing:0.84px;font-weight:700;">Menu</span>
<svg style="left:348px;top:336.8px" width="10" height="13.4" viewBox="0 0 10 13.4" ><path d="M.8 5.600 L5 .7 L9.200 5.600" fill="none" stroke="#cfcfcf" stroke-width="1"/><path d="M.8 7.800 L5 12.700 L9.200 7.800" fill="none" stroke="#cfcfcf" stroke-width="1"/></svg>
<svg style="left:751.5px;top:336.8px" width="10" height="13.4" viewBox="0 0 10 13.4" ><path d="M.8 5.600 L5 .7 L9.200 5.600" fill="none" stroke="#cfcfcf" stroke-width="1"/><path d="M.8 7.800 L5 12.700 L9.200 7.800" fill="none" stroke="#cfcfcf" stroke-width="1"/></svg>
<svg style="left:828.6px;top:336.8px" width="10" height="13.4" viewBox="0 0 10 13.4" ><path d="M.8 5.600 L5 .7 L9.200 5.600" fill="none" stroke="#cfcfcf" stroke-width="1"/><path d="M.8 7.800 L5 12.700 L9.200 7.800" fill="none" stroke="#cfcfcf" stroke-width="1"/></svg>
<svg style="left:906.7px;top:336.8px" width="10" height="13.4" viewBox="0 0 10 13.4" ><path d="M.8 5.600 L5 .7 L9.200 5.600" fill="none" stroke="#cfcfcf" stroke-width="1"/><path d="M.8 7.800 L5 12.700 L9.200 7.800" fill="none" stroke="#cfcfcf" stroke-width="1"/></svg>
<svg style="left:994.5px;top:336.8px" width="10" height="13.4" viewBox="0 0 10 13.4" ><path d="M.8 5.600 L5 .7 L9.200 5.600" fill="none" stroke="#cfcfcf" stroke-width="1"/><path d="M.8 7.800 L5 12.700 L9.200 7.800" fill="none" stroke="#cfcfcf" stroke-width="1"/></svg>
<svg style="left:1082.5px;top:336.8px" width="10" height="13.4" viewBox="0 0 10 13.4" ><path d="M.8 5.600 L5 .7 L9.200 5.600" fill="none" stroke="#cfcfcf" stroke-width="1"/><path d="M.8 7.800 L5 12.700 L9.200 7.800" fill="none" stroke="#cfcfcf" stroke-width="1"/></svg>
<svg style="left:1170.5px;top:336.8px" width="10" height="13.4" viewBox="0 0 10 13.4" ><path d="M.8 5.600 L5 .7 L9.200 5.600" fill="none" stroke="#cfcfcf" stroke-width="1"/><path d="M.8 7.800 L5 12.700 L9.200 7.800" fill="none" stroke="#cfcfcf" stroke-width="1"/></svg>
<svg style="left:1258.5px;top:336.8px" width="10" height="13.4" viewBox="0 0 10 13.4" ><path d="M.8 5.600 L5 .7 L9.200 5.600" fill="none" stroke="#cfcfcf" stroke-width="1"/><path d="M.8 7.800 L5 12.700 L9.200 7.800" fill="none" stroke="#cfcfcf" stroke-width="1"/></svg>
<svg style="left:622px;top:340px" width="9.2" height="5.2" viewBox="0 0 9.200 5.200" ><path d="M4.600 0 L9.200 5.200 H0 Z" fill="#333"/></svg>
<span class="t" style="left:244.2px;top:378.0px;font-size:13px;line-height:17px;color:#333;letter-spacing:0.26px;">0896867700494</span>
<span class="t" style="left:373.0px;top:378.0px;font-size:13px;line-height:17px;color:#333;letter-spacing:-0.37px;">AIR MINERAL CLUB</span>
<span class="t" style="left:646.8px;top:378.0px;font-size:13px;line-height:17px;color:#333;letter-spacing:0.41px;">MINUMAN</span>
<span class="t" style="left:818.9px;top:378.0px;font-size:13px;line-height:17px;color:#333;letter-spacing:-0.17px;">15</span>
<span class="t" style="left:896.9px;top:378.0px;font-size:13px;line-height:17px;color:#333;letter-spacing:-0.17px;">15</span>
<span class="t" style="left:965.8px;top:378.0px;font-size:13px;line-height:17px;color:#333;letter-spacing:0.27px;">5.000</span>
<span class="t" style="left:1054.1px;top:378.0px;font-size:13px;line-height:17px;color:#333;letter-spacing:0.27px;">6.500</span>
<span class="t" style="left:1168.4px;top:378.0px;font-size:13px;line-height:17px;color:#333;letter-spacing:-0.62px;">0</span>
<span class="t" style="left:1256.1px;top:378.0px;font-size:13px;line-height:17px;color:#333;letter-spacing:-0.62px;">0</span>
<div style="left:1298px;top:377px;width:26px;height:21.500px;border:1px solid #c2c2c2;border-radius:2px;background:linear-gradient(#fff,#f3f3f3);box-shadow:0 1px 1px rgba(0,0,0,.12)"></div>
<svg style="left:1304.6px;top:381.4px" width="13.4" height="13.4" viewBox="0 0 24 24" fill="#222"><path fill-rule="evenodd" d="M20.93 9.78 L23.75 9.57 L23.75 14.43 L20.93 14.22 L19.88 16.75 L22.03 18.59 L18.59 22.03 L16.75 19.88 L14.22 20.93 L14.43 23.75 L9.57 23.75 L9.78 20.93 L7.25 19.88 L5.41 22.03 L1.97 18.59 L4.12 16.75 L3.07 14.22 L0.25 14.43 L0.25 9.57 L3.07 9.78 L4.12 7.25 L1.97 5.41 L5.41 1.97 L7.25 4.12 L9.78 3.07 L9.57 0.25 L14.43 0.25 L14.22 3.07 L16.75 4.12 L18.59 1.97 L22.03 5.41 L19.88 7.25 Z M16.20 12.00 a4.2 4.2 0 1 0 -8.40 0 a4.2 4.2 0 1 0 8.40 0 Z"/></svg>
<span class="t" style="left:244.2px;top:411.0px;font-size:13px;line-height:17px;color:#333;letter-spacing:0.33px;">8991906101026</span>
<span class="t" style="left:372.1px;top:411.0px;font-size:13px;line-height:17px;color:#333;letter-spacing:-0.71px;">DRAJUM SUPER KRETEK 16</span>
<span class="t" style="left:646.8px;top:411.0px;font-size:13px;line-height:17px;color:#333;letter-spacing:-0.54px;">ROKOK</span>
<span class="t" style="left:811.3px;top:411.0px;font-size:13px;line-height:17px;color:#333;letter-spacing:0.14px;">100</span>
<span class="t" style="left:889.3px;top:411.0px;font-size:13px;line-height:17px;color:#333;letter-spacing:0.14px;">100</span>
<span class="t" style="left:959.0px;top:411.0px;font-size:13px;line-height:17px;color:#333;letter-spacing:0.13px;">25.000</span>
<span class="t" style="left:1047.4px;top:411.0px;font-size:13px;line-height:17px;color:#333;letter-spacing:0.13px;">28.000</span>
<span class="t" style="left:1168.4px;top:411.0px;font-size:13px;line-height:17px;color:#333;letter-spacing:-0.62px;">0</span>
<span class="t" style="left:1256.1px;top:411.0px;font-size:13px;line-height:17px;color:#333;letter-spacing:-0.62px;">0</span>
<div style="left:1298px;top:410px;width:26px;height:21.500px;border:1px solid #c2c2c2;border-radius:2px;background:linear-gradient(#fff,#f3f3f3);box-shadow:0 1px 1px rgba(0,0,0,.12)"></div>
<svg style="left:1304.6px;top:414.4px" width="13.4" height="13.4" viewBox="0 0 24 24" fill="#222"><path fill-rule="evenodd" d="M20.93 9.78 L23.75 9.57 L23.75 14.43 L20.93 14.22 L19.88 16.75 L22.03 18.59 L18.59 22.03 L16.75 19.88 L14.22 20.93 L14.43 23.75 L9.57 23.75 L9.78 20.93 L7.25 19.88 L5.41 22.03 L1.97 18.59 L4.12 16.75 L3.07 14.22 L0.25 14.43 L0.25 9.57 L3.07 9.78 L4.12 7.25 L1.97 5.41 L5.41 1.97 L7.25 4.12 L9.78 3.07 L9.57 0.25 L14.43 0.25 L14.22 3.07 L16.75 4.12 L18.59 1.97 L22.03 5.41 L19.88 7.25 Z M16.20 12.00 a4.2 4.2 0 1 0 -8.40 0 a4.2 4.2 0 1 0 8.40 0 Z"/></svg>
<span class="t" style="left:244.2px;top:444.0px;font-size:13px;line-height:17px;color:#333;letter-spacing:0.33px;">8992759244021</span>
<span class="t" style="left:372.1px;top:444.0px;font-size:13px;line-height:17px;color:#333;letter-spacing:-0.55px;">NICE FACIAL TISSUE</span>
<span class="t" style="left:647.7px;top:444.0px;font-size:13px;line-height:17px;color:#333;letter-spacing:-1.17px;">TISSUE</span>
<span class="t" style="left:818.9px;top:444.0px;font-size:13px;line-height:17px;color:#333;letter-spacing:-0.17px;">50</span>
<span class="t" style="left:896.9px;top:444.0px;font-size:13px;line-height:17px;color:#333;letter-spacing:-0.17px;">50</span>
<span class="t" style="left:966.7px;top:444.0px;font-size:13px;line-height:17px;color:#333;letter-spacing:0.05px;">6.000</span>
<span class="t" style="left:1054.1px;top:444.0px;font-size:13px;line-height:17px;color:#333;letter-spacing:0.27px;">7.500</span>
<span class="t" style="left:1168.4px;top:444.0px;font-size:13px;line-height:17px;color:#333;letter-spacing:-0.62px;">0</span>
<span class="t" style="left:1256.1px;top:444.0px;font-size:13px;line-height:17px;color:#333;letter-spacing:-0.62px;">0</span>
<div style="left:1298px;top:443px;width:26px;height:21.500px;border:1px solid #c2c2c2;border-radius:2px;background:linear-gradient(#fff,#f3f3f3);box-shadow:0 1px 1px rgba(0,0,0,.12)"></div>
<svg style="left:1304.6px;top:447.4px" width="13.4" height="13.4" viewBox="0 0 24 24" fill="#222"><path fill-rule="evenodd" d="M20.93 9.78 L23.75 9.57 L23.75 14.43 L20.93 14.22 L19.88 16.75 L22.03 18.59 L18.59 22.03 L16.75 19.88 L14.22 20.93 L14.43 23.75 L9.57 23.75 L9.78 20.93 L7.25 19.88 L5.41 22.03 L1.97 18.59 L4.12 16.75 L3.07 14.22 L0.25 14.43 L0.25 9.57 L3.07 9.78 L4.12 7.25 L1.97 5.41 L5.41 1.97 L7.25 4.12 L9.78 3.07 L9.57 0.25 L14.43 0.25 L14.22 3.07 L16.75 4.12 L18.59 1.97 L22.03 5.41 L19.88 7.25 Z M16.20 12.00 a4.2 4.2 0 1 0 -8.40 0 a4.2 4.2 0 1 0 8.40 0 Z"/></svg>
<span class="t" style="left:245.0px;top:480.3px;font-size:12px;line-height:16px;color:#333;letter-spacing:-0.69px;">Show</span>
<div style="left:276px;top:474px;width:72px;height:30px;border:1px solid #ccc;background:#fff"></div>
<span class="t" style="left:290.8px;top:480.3px;font-size:13px;line-height:17px;color:#444;letter-spacing:-0.28px;">100</span>
<svg style="left:333.3px;top:485.5px" width="9.4" height="6" viewBox="0 0 9.400 6" ><path d="M1 1 L4.700 4.600 L8.400 1" fill="none" stroke="#333" stroke-width="1.800"/></svg>
<span class="t" style="left:351.0px;top:480.3px;font-size:12px;line-height:16px;color:#333;letter-spacing:-0.06px;">entries</span>
<div style="left:1173px;top:476px;width:151px;height:29px;border:1px solid #ddd;border-radius:2px;background:#fff;box-shadow:0 1px 1px rgba(0,0,0,.05)"></div>
<div style="left:1243px;top:476px;width:32px;height:29px;background:#3276b1"></div>
<span class="t" style="left:1186.4px;top:483.3px;font-size:12px;line-height:16px;color:#999;letter-spacing:-0.31px;">Previous</span>
<span class="t" style="left:1255.1px;top:483.3px;font-size:12px;line-height:16px;color:#fff;letter-spacing:-1.50px;">1</span>
<span class="t" style="left:1287.2px;top:483.3px;font-size:12px;line-height:16px;color:#999;letter-spacing:-0.56px;">Next</span>
</main>
<footer>
<div id="footer"></div>
<span class="t" style="left:231.9px;top:658.2px;font-size:13px;line-height:17px;color:#fff;letter-spacing:0.09px;">SID Retail P2P web - Beta version 1.0 © 2017-2018</span>
<span class="t" style="left:1122.4px;top:658.2px;font-size:13px;line-height:17px;color:#9fb0b8;letter-spacing:-0.15px;font-style:italic;">Last account activity</span>
<svg style="left:1242px;top:660.5px" width="10.5" height="10.5" viewBox="0 0 24 24" ><circle cx="12" cy="12" r="9.600" fill="none" stroke="#9fb0b8" stroke-width="4"/><path d="M12.600 6 V13 H7.500" fill="none" stroke="#9fb0b8" stroke-width="3"/></svg>
<span class="t" style="left:1256.2px;top:658.2px;font-size:13px;line-height:17px;color:#9fb0b8;letter-spacing:-0.19px;font-weight:700;font-style:italic;">52 mins ago</span>
</footer>
<div id="scroll"></div>
<div style="left:1351px;top:85px;width:13px;height:574px;background:#c1c1c1"></div>
<svg style="left:1353.5px;top:75px" width="8" height="4.5" viewBox="0 0 8 4.500" ><path d="M4 0 L8 4.500 H0 Z" fill="#a3a3a3"/></svg>
<svg style="left:1354px;top:682px" width="7" height="4" viewBox="0 0 8 4.500" ><path d="M4 4.500 L8 0 H0 Z" fill="#505050"/></svg>
</body>
</html>
